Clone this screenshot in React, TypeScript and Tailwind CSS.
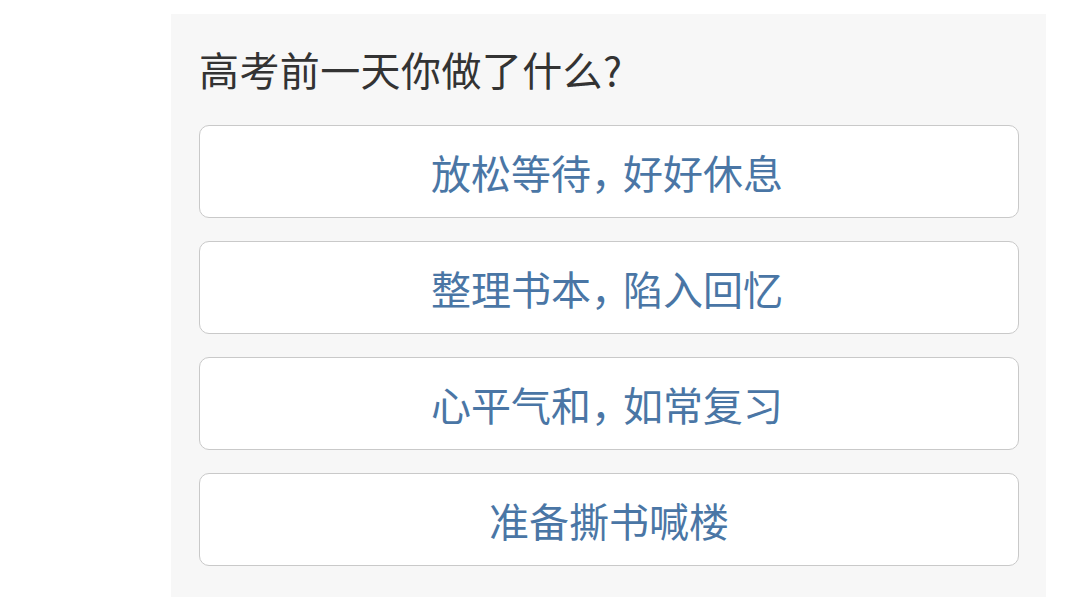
const options = [
  ["放松等待", "好好休息"],
  ["整理书本", "陷入回忆"],
  ["心平气和", "如常复习"],
  ["准备撕书喊楼"],
];

const App = () => {
  return (
    <div
      className="min-h-[597px] bg-white pt-[14px] pl-[171px]"
      style={{ fontFamily: '"Noto Sans CJK SC", "Noto Sans", sans-serif' }}
    >
      <div className="w-[875px] min-h-[583px] bg-[#f7f7f7] pt-[35px] pl-[28px] pr-[27px]">
        <h1 className="text-[40px] leading-[40px] text-[#333333] font-normal tracking-[0.4px]">
          高考前一天你做了什么?
        </h1>
        <div className="mt-9 flex flex-col gap-[23px]">
          {options.map((parts, i) => (
            <button
              key={i}
              className="h-[93px] w-full rounded-[10px] border border-[#c9c9c9] bg-white text-[40px] leading-[40px] text-[#4a76a5] flex items-center justify-center"
            >
              {parts.length > 1 ? (
                <span className="pr-[4px]">
                  {parts[0]}
                  <span className="tracking-[-8px]">，</span>
                  {parts[1]}
                </span>
              ) : (
                parts[0]
              )}
            </button>
          ))}
        </div>
      </div>
    </div>
  );
};

export default App;
